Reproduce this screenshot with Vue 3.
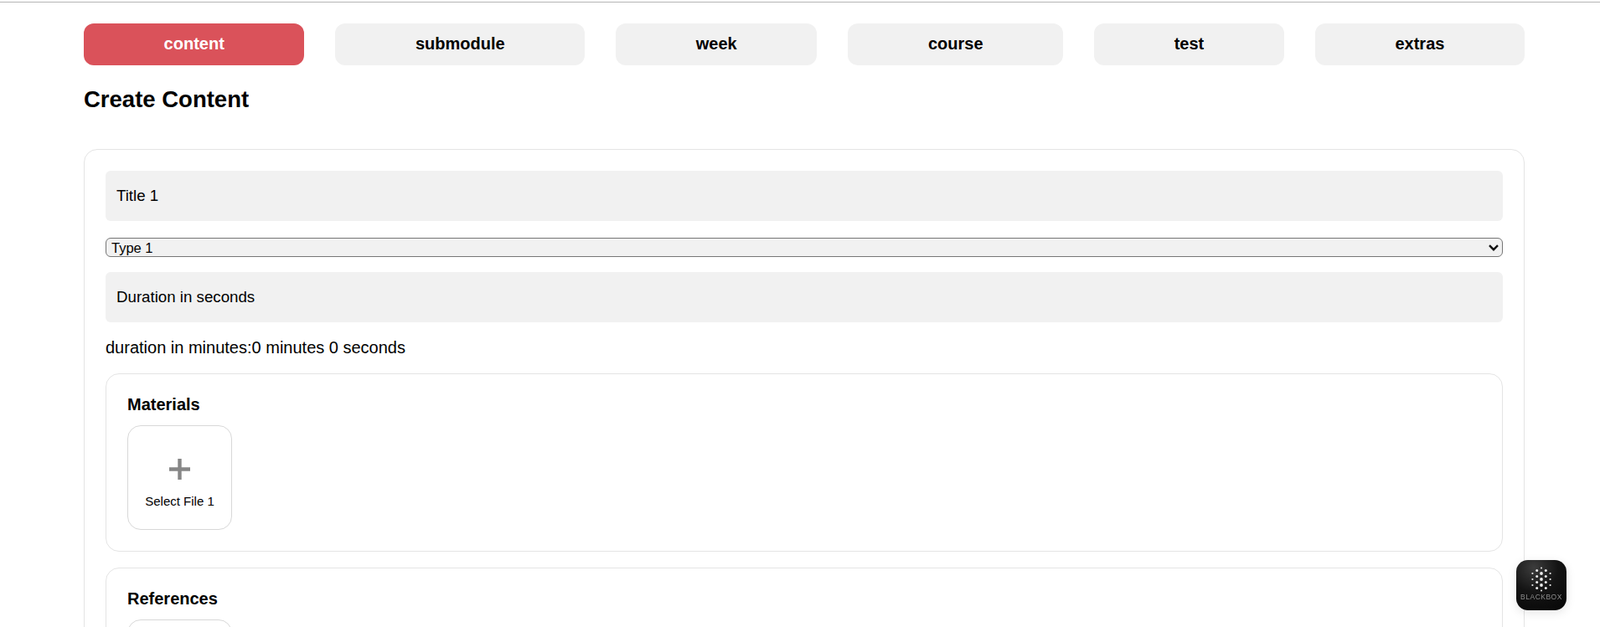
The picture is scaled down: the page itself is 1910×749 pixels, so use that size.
<script setup>
const tabs = ['content', 'submodule', 'week', 'course', 'test', 'extras']
const sections = ['Materials', 'References']
// Hex-style dot cluster of the floating badge
const columns = [
  { x: -10.6, ys: [-7, 0, 7], r: 1.1 },
  { x: -5.3, ys: [-10.5, -3.5, 3.5, 10.5], r: 1.5 },
  { x: 0, ys: [-13.5, -7, 0, 7, 13.5], r: 1.9 },
  { x: 5.3, ys: [-10.5, -3.5, 3.5, 10.5], r: 1.5 },
  { x: 10.6, ys: [-7, 0, 7], r: 1.1 }
]
const dots = []
columns.forEach((c) =>
  c.ys.forEach((y) => dots.push({ x: 30 + c.x, y: 23 + y, r: Math.abs(y) > 13 ? 1 : c.r }))
)
</script>

<template>
  <div class="topline"></div>
  <div class="page">
    <nav class="tabs">
      <button v-for="(t, i) in tabs" :key="t" class="tab" :class="{ active: i === 0 }">{{ t }}</button>
    </nav>
    <h1 class="title">Create Content</h1>
    <form class="card" @submit.prevent>
      <input class="field" type="text" placeholder="Title 1" />
      <div class="select-wrap">
        <select class="type">
          <option>Type 1</option>
          <option>Type 2</option>
        </select>
        <svg class="chevron" width="12" height="8" viewBox="0 0 12 8" aria-hidden="true">
          <path d="M1 1.2l5 5 5-5" stroke="#111" stroke-width="2.4" fill="none" />
        </svg>
      </div>
      <input class="field" type="text" placeholder="Duration in seconds" />
      <p class="duration">duration in minutes:0 minutes 0 seconds</p>
      <section v-for="s in sections" :key="s" class="sub">
        <h2 class="sub-title">{{ s }}</h2>
        <button type="button" class="picker">
          <svg class="plus" width="25" height="25" viewBox="0 0 25 25" aria-hidden="true">
            <path d="M12.5 0v25M0 12.5h25" stroke="#868686" stroke-width="4.4" fill="none" />
          </svg>
          <span class="picker-label">Select File 1</span>
        </button>
      </section>
    </form>
    <div class="badge">
      <svg class="badge-dots" width="60" height="40" viewBox="0 0 60 40" aria-hidden="true">
        <circle v-for="(d, i) in dots" :key="i" :cx="d.x" :cy="d.y" :r="d.r" fill="#ececec" />
      </svg>
      <span class="badge-text">BLACKBOX</span>
    </div>
  </div>
</template>

<style scoped>
.topline {
  height: 1px;
  margin-top: 2px;
  background: #b5b5b5;
}
.page {
  box-sizing: border-box;
  padding: 25px 90px 40px 100px;
  font-family: "Liberation Sans", Arial, sans-serif;
  color: #000;
}
.tabs {
  display: flex;
  gap: 37px;
}
.tab {
  flex: 1 1 auto;
  height: 50px;
  border: 0;
  border-radius: 12px;
  background: #f1f1f1;
  color: #000;
  font: bold 20px "Liberation Sans", Arial, sans-serif;
  padding: 0 0 2px;
}
.tab.active {
  background: #da525a;
  color: #fff;
}
.title {
  margin: 25px 0 43px;
  font-size: 27.5px;
  line-height: 32px;
  font-weight: bold;
}
.card {
  border: 1px solid #e4e4e4;
  border-radius: 16px;
  padding: 25px;
}
.field {
  display: block;
  box-sizing: border-box;
  width: 100%;
  height: 60px;
  padding: 0 13px;
  border: 0;
  border-radius: 6px;
  background: #f1f1f1;
  font: 18.7px "Liberation Sans", Arial, sans-serif;
}
.field::placeholder {
  color: #000;
  opacity: 1;
}
.select-wrap {
  position: relative;
  margin: 20px 0 18px;
}
.type {
  display: block;
  box-sizing: border-box;
  width: 100%;
  height: 23px;
  padding: 0 6px;
  appearance: none;
  border: 1px solid #767676;
  border-radius: 6px;
  background-color: #f1f1f1;
  font: 16.5px "Liberation Sans", Arial, sans-serif;
  color: #000;
}
.chevron {
  position: absolute;
  right: 5px;
  top: 8px;
  pointer-events: none;
}
.duration {
  margin: 19px 0 19px;
  font-size: 20px;
  line-height: 23px;
}
.sub {
  border: 1px solid #e4e4e4;
  border-radius: 16px;
  padding: 25px;
  margin-bottom: 19px;
}
.sub-title {
  margin: 0 0 13px;
  font-size: 20px;
  line-height: 23px;
  font-weight: bold;
}
.picker {
  display: flex;
  flex-direction: column;
  align-items: center;
  box-sizing: border-box;
  width: 125px;
  height: 125px;
  padding: 39px 0 0;
  background: #fff;
  border: 1px solid #d8d8d8;
  border-radius: 16px;
  color: #000;
}
.plus {
  display: block;
}
.picker-label {
  margin-top: 18px;
  font: 15px/16px "Liberation Sans", Arial, sans-serif;
}
.badge {
  position: fixed;
  left: 1810px;
  top: 669px;
  width: 60px;
  height: 60px;
  border-radius: 14px;
  background: radial-gradient(circle at 35% 15%, #3c3c3c 0%, #141414 45%, #060606 100%);
  box-shadow: 0 3px 12px rgba(0, 0, 0, 0.1);
  overflow: hidden;
  text-align: center;
}
.badge-dots {
  display: block;
}
.badge-text {
  display: block;
  font-size: 8.5px;
  line-height: 8px;
  letter-spacing: 0.5px;
  color: #8c8c8c;
}
</style>

<style>
html {
  overflow: hidden;
}
body {
  background: #fff;
}
</style>
